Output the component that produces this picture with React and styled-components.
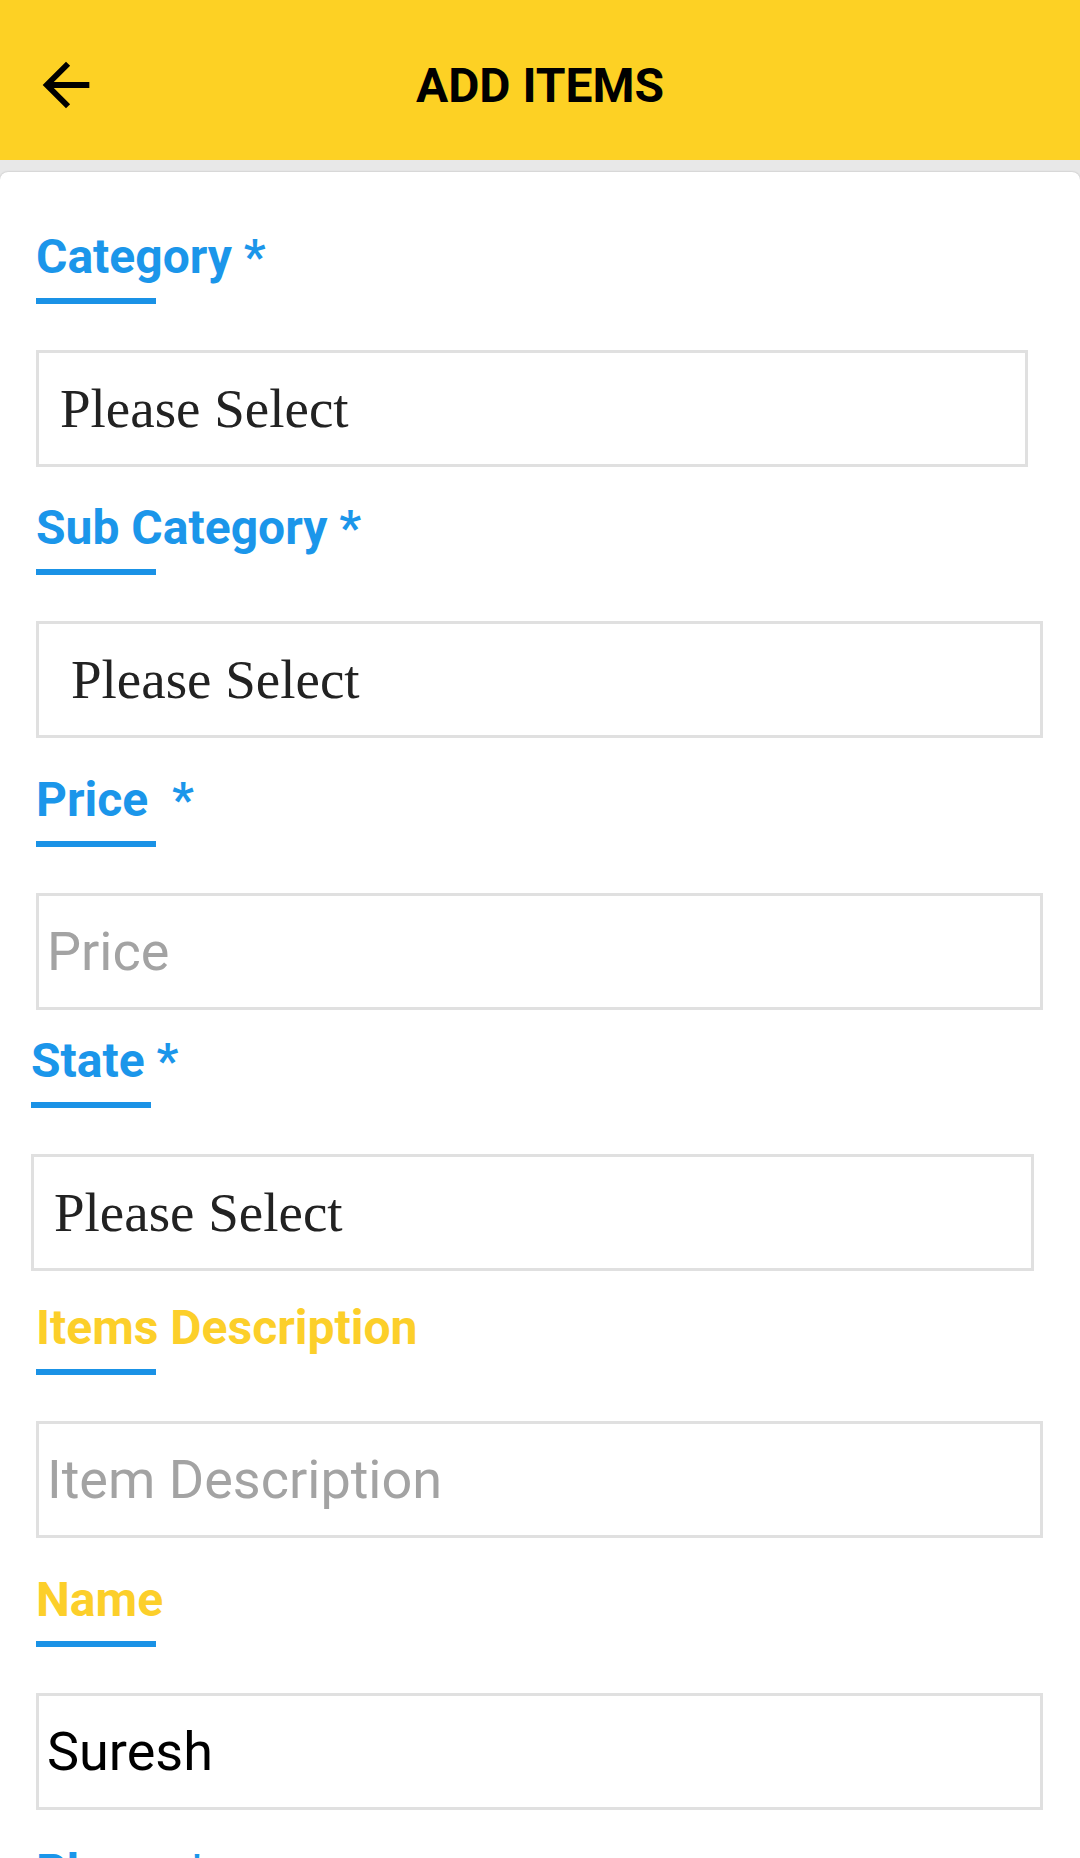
import React from "react";
import styled, { createGlobalStyle } from "styled-components";

const GlobalStyle = createGlobalStyle`
  body {
    margin: 0;
    background: #e8e8e8;
    font-family: Roboto, "Liberation Sans", sans-serif;
  }
`;

const Page = styled.div`
  width: 1080px;
  min-height: 1858px;
  background: #e8e8e8;
  overflow: hidden;
`;

const Header = styled.header`
  height: 160px;
  box-sizing: border-box;
  padding: 12px 0 0 31px;
  background: #fdd124;
  display: grid;
  grid-template-columns: 1fr auto 1fr;
  align-items: center;
`;

const BackButton = styled.button`
  justify-self: start;
  width: 70px;
  height: 70px;
  padding: 0;
  border: 0;
  background: none;
  display: flex;
  margin-top: -12px;
  transform: translateY(5px);
`;

const Title = styled.h1`
  margin: 0;
  font-size: 48px;
  line-height: 56px;
  font-weight: 700;
  color: #000;
  margin-left: -31px;
`;

const Card = styled.main`
  margin-top: 12px;
  min-height: 1700px;
  background: #fff;
  border-radius: 8px 8px 0 0;
  box-shadow: 0 0 2px rgba(0, 0, 0, 0.25);
  padding-top: 57px;
`;

const Field = styled.section`
  margin-top: ${(p) => p.$top || 0}px;
  padding-left: ${(p) => p.$left || 36}px;
`;

const Label = styled.h2`
  margin: 0;
  font-size: 48px;
  line-height: 56px;
  font-weight: 700;
  color: ${(p) => (p.$optional ? "#fccf2a" : "#1b96ea")};
  white-space: pre;
`;

const Underline = styled.div`
  width: 120px;
  height: 6px;
  margin-top: 13px;
  background: #1a92e6;
`;

const Box = styled.div`
  margin-top: 46px;
  width: ${(p) => p.$width || 1007}px;
  height: 117px;
  box-sizing: border-box;
  border: 3px solid #e0e0e0;
  display: flex;
  align-items: center;
  padding-left: ${(p) => p.$pad || 8}px;
`;

const SelectText = styled.span`
  font-family: "Liberation Serif", serif;
  font-size: 55px;
  color: #222;
`;

const Input = styled.input`
  width: 100%;
  border: 0;
  outline: none;
  padding: 0;
  background: transparent;
  font-family: Roboto, "Liberation Sans", sans-serif;
  font-size: 54px;
  color: #000;

  &::placeholder {
    color: #a3a3a3;
  }
`;

const ArrowBack = () => (
  <svg width="70" height="70" viewBox="0 0 24 24" fill="#000">
    <path d="M20 11H7.83l5.59-5.59L12 4l-8 8 8 8 1.41-1.41L7.83 13H20v-2z" />
  </svg>
);

const App = () => (
  <Page>
    <GlobalStyle />
    <Header>
      <BackButton aria-label="Back">
        <ArrowBack />
      </BackButton>
      <Title>ADD ITEMS</Title>
    </Header>
    <Card>
      <Field>
        <Label>Category *</Label>
        <Underline />
        <Box $width={992} $pad={21}>
          <SelectText>Please Select</SelectText>
        </Box>
      </Field>

      <Field $top={33}>
        <Label>Sub Category *</Label>
        <Underline />
        <Box $pad={32}>
          <SelectText>Please Select</SelectText>
        </Box>
      </Field>

      <Field $top={34}>
        <Label>{"Price  *"}</Label>
        <Underline />
        <Box>
          <Input placeholder="Price" />
        </Box>
      </Field>

      <Field $top={23} $left={31}>
        <Label>State *</Label>
        <Underline />
        <Box $width={1003} $pad={20}>
          <SelectText>Please Select</SelectText>
        </Box>
      </Field>

      <Field $top={29}>
        <Label $optional>Items Description</Label>
        <Underline />
        <Box>
          <Input placeholder="Item Description" />
        </Box>
      </Field>

      <Field $top={34}>
        <Label $optional>Name</Label>
        <Underline />
        <Box>
          <Input defaultValue="Suresh" />
        </Box>
      </Field>

      <Field $top={34}>
        <Label>Phone *</Label>
        <Underline />
      </Field>
    </Card>
  </Page>
);

export default App;
